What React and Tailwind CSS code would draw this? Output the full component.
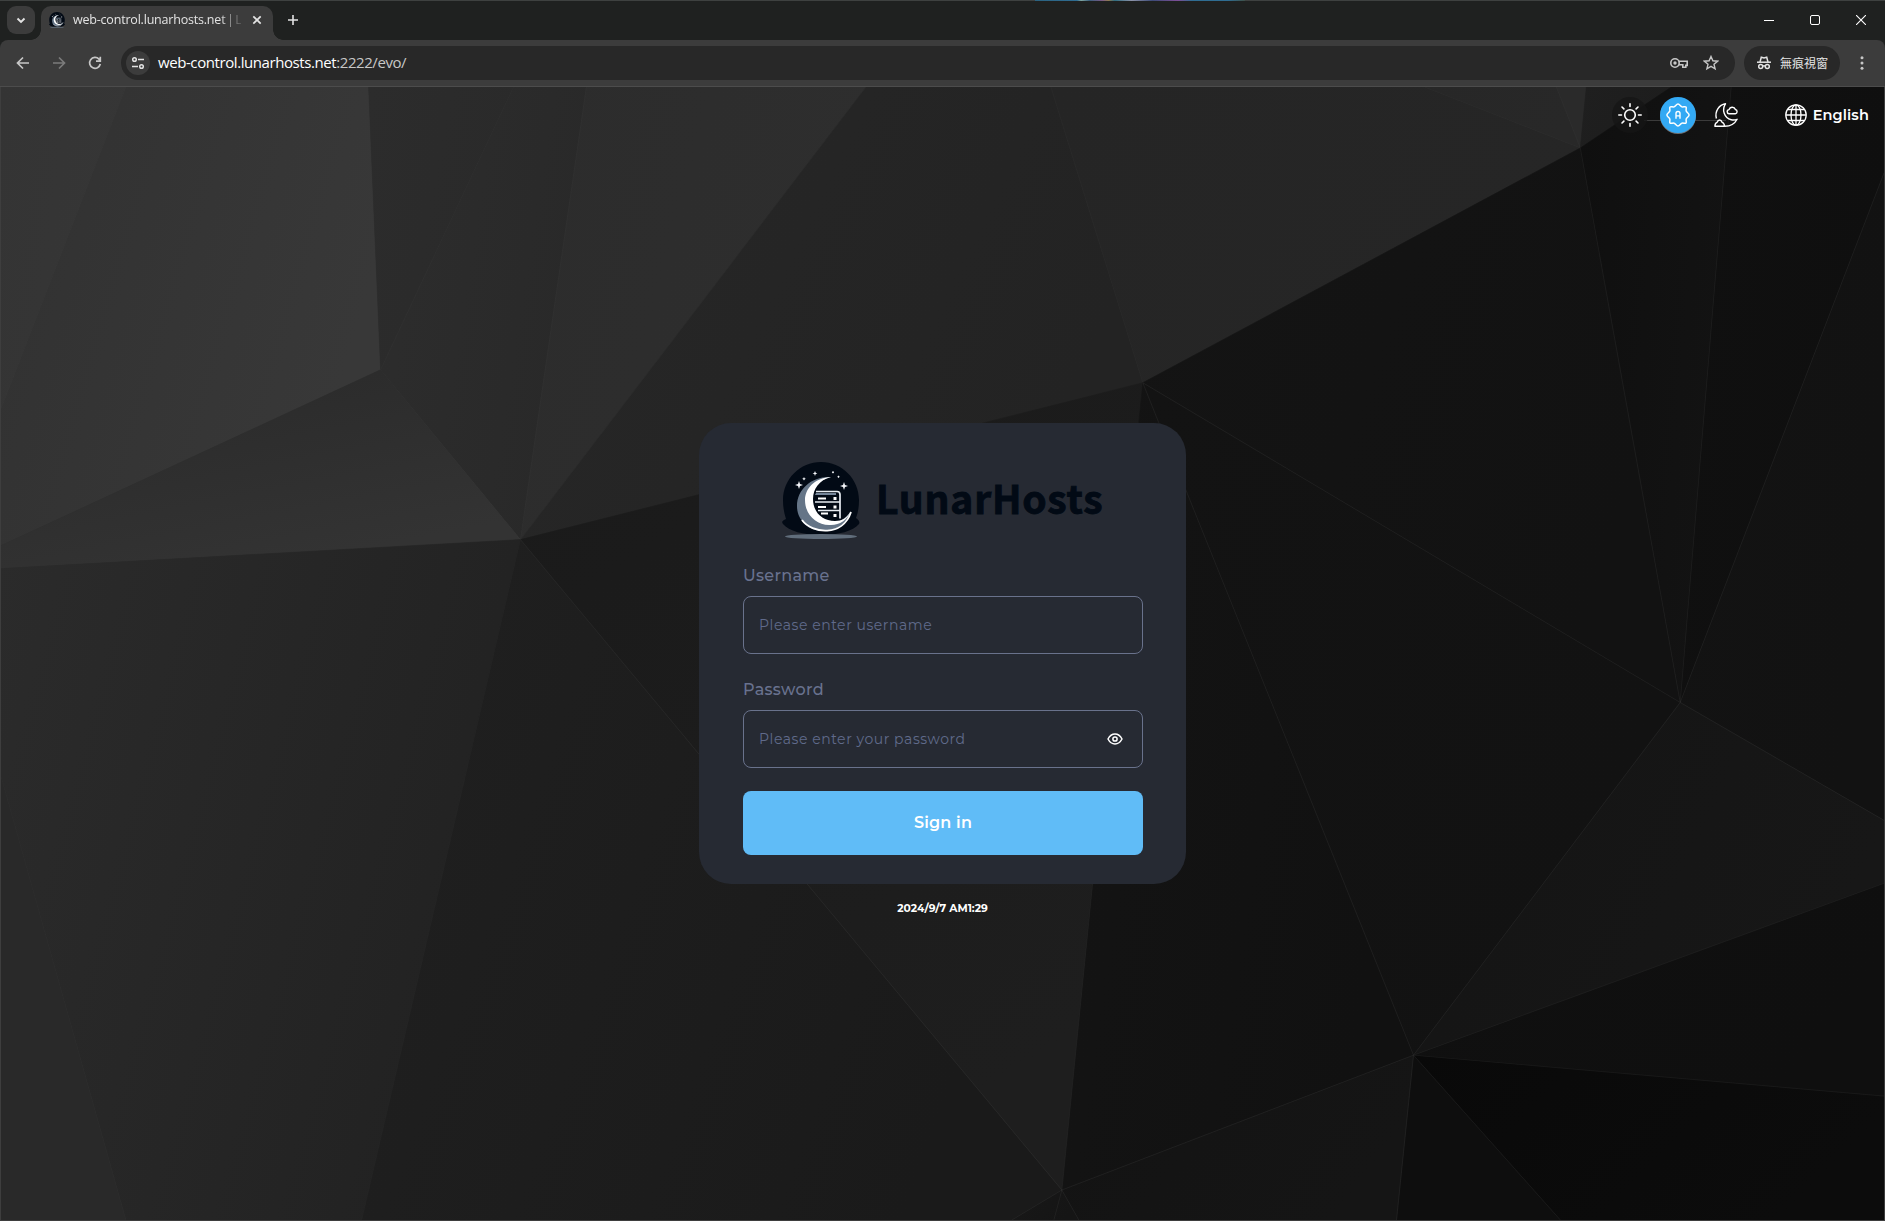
import React from 'react';

const FACETS = [
  { p: '0,87 125,87 0,409', a: '#343434', b: '#363636' },
  { p: '125,87 368,87 380,370 0,546 0,409', a: '#313131', b: '#383838' },
  { p: '368,87 513,87 380,370', a: '#2c2c2c', b: '#2a2a2a' },
  { p: '513,87 586,87 520,540 380,370', a: '#2d2d2d', b: '#292929' },
  { p: '586,87 866,87 520,540', a: '#2c2c2c', b: '#2e2e2e' },
  { p: '866,87 1051,87 1143,383 520,540', a: '#272727', b: '#232323' },
  { p: '1051,87 1425,87 1581,148 1143,383', a: '#252525', b: '#262626' },
  { p: '1425,87 1557,87 1581,148', a: '#272727', b: '#282828' },
  { p: '1557,87 1587,87 1581,148', a: '#2a2a2a', b: '#2a2a2a' },
  { p: '1587,87 1672,87 1581,148', a: '#1f1f1f', b: '#1d1d1d' },
  { p: '380,370 520,540 0,569 0,546', a: '#292929', b: '#333333', v: true },
  { p: '0,569 520,540 361,1221 125,1221 0,777', a: '#2b2b2b', b: '#222222' },
  { p: '0,777 125,1221 0,1221', a: '#292929', b: '#292929' },
  { p: '520,540 1062,1191 1012,1221 361,1221', a: '#202020', b: '#1a1a1a' },
  { p: '520,540 1143,383 1139,423 1062,1191', a: '#1a1a1a', b: '#1e1e1e', v: true },
  { p: '1143,383 1414,1056 1062,1191', a: '#141414', b: '#111111' },
  { p: '1143,383 1681,703 1414,1056', a: '#131313', b: '#121212' },
  { p: '1143,383 1581,148 1681,703', a: '#141414', b: '#121212' },
  { p: '1581,148 1672,87 1732,87 1681,703', a: '#0f0f0f', b: '#131313' },
  { p: '1732,87 1885,87 1885,173 1681,703', a: '#101010', b: '#0f0f0f' },
  { p: '1885,173 1885,821 1681,703', a: '#131313', b: '#121212' },
  { p: '1681,703 1885,821 1885,884 1414,1056', a: '#141414', b: '#171717' },
  { p: '1414,1056 1885,884 1885,1097', a: '#101010', b: '#0f0f0f' },
  { p: '1414,1056 1885,1097 1885,1221 1561,1221', a: '#090909', b: '#0c0c0c' },
  { p: '1414,1056 1561,1221 1397,1221', a: '#0e0e0e', b: '#0e0e0e' },
  { p: '1414,1056 1397,1221 1079,1221 1062,1191', a: '#131313', b: '#151515' },
  { p: '1062,1191 1079,1221 1012,1221', a: '#181818', b: '#151515' },
];

const EDGES =
  'M1143 383 1159 423 1414 1056 1062 1191M1143 383 1681 703 1885 821M1581 148 1681 703 1732 87M1681 703 1885 173M1681 703 1414 1056 1885 884M1414 1056 1885 1097M1414 1056 1561 1221M1414 1056 1397 1221M520 540 1062 1191 1139 423M1062 1191 1012 1221M1062 1191 1054 1221M1062 1191 1079 1221';

const SOFT_EDGES =
  'M125 87 0 409M380 370 513 87M380 370 520 540 586 87M520 540 866 87M520 540 361 1221M0 777 125 1221M1143 383 1051 87M1581 148 1425 87M1581 148 1557 87';

function Backdrop() {
  return (
    <svg className="absolute inset-0 h-full w-full" viewBox="0 87 1885 1134" preserveAspectRatio="none" aria-hidden="true">
      <defs>
        {FACETS.map((f, i) => (
          <linearGradient key={i} id={`facet${i}`} x1="0" y1="0" x2={f.v ? '0.5' : '1'} y2={f.v ? '1' : '0.35'}>
            <stop offset="0" stopColor={f.a} />
            <stop offset="1" stopColor={f.b} />
          </linearGradient>
        ))}
      </defs>
      {FACETS.map((f, i) => (
        <polygon key={i} points={f.p} fill={`url(#facet${i})`} stroke={`url(#facet${i})`} strokeWidth="0.6" />
      ))}
      <path d={EDGES} fill="none" stroke="#fff" strokeOpacity="0.05" />
      <path d={SOFT_EDGES} fill="none" stroke="#fff" strokeOpacity="0.025" />
    </svg>
  );
}

function MoonMark({ className }) {
  return (
    <svg className={className} viewBox="0 0 78 78" aria-hidden="true">
      <path d="M39 0C60 0 77 17 77 38c0 7-1 13-3 18 3 2 4 4 3 6-6 7-20 11-38 11S7 69 1 62c-2-2 0-4 3-5C2 51 1 45 1 38 1 17 18 0 39 0z" fill="#020a15" />
      <ellipse cx="39" cy="74.5" rx="36" ry="2.4" fill="#606d7b" />
      <path d="M34 29.500h21q3 0 3 3v24M33 40h25M36 48.500h22" fill="none" stroke="#e8edf2" strokeWidth="1.700" />
      <path d="M34 31h20v2H33z" fill="#75869a" />
      <path d="M36 36.500h8M36 45h8M39 51.500h7" stroke="#fff" strokeWidth="2" />
      <path d="M51.500 36.500h3M51.500 45h3M51.500 53.500h3" stroke="#fff" strokeWidth="2.800" />
      <path d="M49 15C30 14 15 27 15 44c0 14 11 25 26 25 14 0 24-7 28-20-6 9-14 12-22 12C34 60 28 50 28 38c0-10 8-20 21-23z" fill="#657587" />
      <path d="M49 15C32 16 23 27 23 38c0 15 12 26 26 25 9 0 16-5 20-14-4 7-9 10-16 10C40 59 31 50 31 37c0-10 6-19 18-22z" fill="#fff" />
      <path d="M20 58C30 72 61 75 69 50" fill="none" stroke="#fff" strokeWidth="1.800" />
      <path d="M17 19l1 3 3 1-3 1-1 3-1-3-3-1 3-1zM62 20l1 3 3 1-3 1-1 3-1-3-3-1 3-1zM33 9l.7 1.700 1.700.7-1.700.7L33 14l-.7-1.900-1.700-.7 1.700-.7zM22 15l.6 1.200 1.200.6-1.200.6L22 18.500l-.6-1.100-1.200-.6 1.200-.6zM51 9l1.200 1.200L51 11.500l-1.200-1.300zM56.500 13.500l1.200 1.300-1.200 1.200-1.200-1.200z" fill="#f4f6fa" />
    </svg>
  );
}

const stroke = { fill: 'none', stroke: 'currentColor' };

function TabStrip() {
  return (
    <div className="relative flex h-10 shrink-0 items-start border-t border-[#3e4140] bg-[#1f2120] pl-[7px] pt-[5px] text-[#e3e3e3]">
      <span className="absolute -top-px left-[1035px] h-px w-[210px] bg-[linear-gradient(90deg,#2b6280,#2f6d92_20%,#7fa5a0_22%,#3b5f7d_26%,#7a5a86_32%,#8f7a52_35%,#2f6d80_38%,#8c93a8_46%,#3d4b78_56%,#7d4f96_68%,#2f6d92_75%,#2f6d92_92%,#3e5149)]" />
      <button className="grid h-7 w-7 place-items-center rounded-[9px] bg-[#3c3c3c]">
        <svg className="h-4 w-4" viewBox="0 0 16 16" {...stroke} strokeWidth="1.900"><path d="m4.500 6.500 3.500 3.500 3.500-3.500" /></svg>
      </button>
      <div className="relative ml-1.5 flex h-[34px] w-[232px] items-center rounded-t-[10px] bg-[#3c3c3c] pb-[6px] pl-2">
        <span className="absolute -left-2.5 bottom-0 h-2.5 w-2.5 bg-[radial-gradient(circle_at_0_0,transparent_9.500px,#3c3c3c_10px)]" />
        <span className="absolute -right-2.5 bottom-0 h-2.5 w-2.5 bg-[radial-gradient(circle_at_100%_0,transparent_9.500px,#3c3c3c_10px)]" />
        <MoonMark className="h-4 w-4 shrink-0" />
        <span className="ml-2 w-[168px] whitespace-nowrap font-['Open_Sans',sans-serif] text-[12.500px] leading-4 tracking-[-0.200px] [word-spacing:-1.500px] [mask-image:linear-gradient(to_right,#000_146px,transparent_172px)]">
          web-control.lunarhosts.net | L
        </span>
        <svg className="ml-2 h-4 w-4" viewBox="0 0 16 16" {...stroke} strokeWidth="1.700"><path d="m4.300 4.300 7.400 7.400M11.700 4.300l-7.400 7.400" /></svg>
      </div>
      <svg className="ml-3 mt-1.5 h-4 w-4" viewBox="0 0 16 16" {...stroke} strokeWidth="1.600"><path d="M8 3v10M3 8h10" /></svg>
      <div className="ml-auto flex items-center gap-[36px] pr-[19px] pt-[9px] text-white">
        <svg className="h-2.5 w-2.5" viewBox="0 0 10 10" {...stroke}><path d="M0 5.500h10" /></svg>
        <svg className="h-2.5 w-2.5" viewBox="0 0 10 10" {...stroke}><rect x=".5" y=".5" width="9" height="9" rx="1.500" /></svg>
        <svg className="h-2.5 w-2.5" viewBox="0 0 10 10" {...stroke} strokeWidth="1.100"><path d="m0 0 10 10M10 0 0 10" /></svg>
      </div>
    </div>
  );
}

function Toolbar() {
  return (
    <div className="flex h-[47px] shrink-0 items-center rounded-t-lg border-b border-[#4c4c4c] bg-[#3c3c3c] pl-[15px] text-[#c7c7c7]">
      <svg className="h-4 w-4" viewBox="0 0 16 16" {...stroke} strokeWidth="1.700"><path d="M14 8H3M8 2.500 2.500 8 8 13.500" /></svg>
      <svg className="ml-5 h-4 w-4 text-[#7b7b7b]" viewBox="0 0 16 16" {...stroke} strokeWidth="1.700"><path d="M2 8h11M8 2.500 13.500 8 8 13.500" /></svg>
      <svg className="ml-5 h-4 w-4" viewBox="0 0 16 16" {...stroke} strokeWidth="1.700"><path d="M13.300 9A5.400 5.400 0 1 1 12 4.200l1 1M13.300 1.800v4.400H9" /></svg>
      <div className="ml-[18px] flex h-[34px] flex-1 items-center rounded-full bg-[#282828] pl-[5px] pr-4">
        <span className="grid h-6 w-6 place-items-center rounded-full bg-[#3c3c3c] text-[#e3e3e3]">
          <svg className="h-4 w-4" viewBox="0 0 16 16" {...stroke} strokeWidth="1.500"><circle cx="4.500" cy="4.500" r="1.800" /><path d="M8 4.500h6M2 11.500h6" /><circle cx="11.500" cy="11.500" r="1.800" /></svg>
        </span>
        <span className="mb-0.5 ml-2 font-['Open_Sans',sans-serif] text-[15px] leading-5 tracking-[-0.420px] text-white">
          web-control.lunarhosts.net<span className="text-[#c7c7c7]">:2222/evo/</span>
        </span>
        <svg className="ml-auto h-[18px] w-[18px]" viewBox="0 0 18 18" {...stroke} strokeWidth="1.600"><circle cx="5" cy="9" r="4.200" /><circle cx="5" cy="9" r="1.700" fill="currentColor" stroke="none" /><path d="M9 7.200h8.200v4.200h-1.400v1.800h-3v-2.400H9" /></svg>
        <svg className="ml-[15px] h-4 w-4" viewBox="0 0 16 16" {...stroke} strokeWidth="1.400"><path d="m8 1.500 1.900 4.300 4.700.4-3.600 3.100 1.100 4.600L8 11.400l-4.100 2.500L5 9.300 1.400 6.200l4.700-.4z" /></svg>
      </div>
      <div className="ml-[9px] flex h-[34px] w-24 items-center rounded-full bg-[#282828] pl-3 text-[#e3e3e3]">
        <svg className="h-4 w-4" viewBox="0 0 16 16" {...stroke} strokeWidth="1.500"><path d="M1 7.200h14" /><path d="M4 7 5.300 2.200l2.700.7 2.700-.7L12 7" /><circle cx="4.700" cy="11.500" r="2" /><circle cx="11.300" cy="11.500" r="2" /><path d="M6.700 11.200q1.300-.8 2.600 0" /></svg>
        <span className="ml-2 whitespace-nowrap font-['Noto_Sans_CJK_TC',sans-serif] text-xs leading-4">無痕視窗</span>
      </div>
      <svg className="ml-3.5 mr-[15px] h-4 w-4" viewBox="0 0 16 16" fill="currentColor"><circle cx="8" cy="2.800" r="1.500" /><circle cx="8" cy="8" r="1.500" /><circle cx="8" cy="13.200" r="1.500" /></svg>
    </div>
  );
}

function ThemeBar() {
  return (
    <div className="relative flex h-[56px] items-center justify-end pr-[15px] text-white">
      <span className="absolute right-[158px] top-[33px] h-px w-[82px] bg-[#3b3b3b]" />
      <span className="relative grid h-9 w-9 place-items-center rounded-full bg-[#151515]/80">
        <svg className="h-6 w-6" viewBox="0 0 24 24" {...stroke} strokeWidth="1.600" strokeLinecap="round"><circle cx="12" cy="12" r="5.300" /><path d="M12 .8v2.700M12 20.500v2.700M.8 12h2.700M20.500 12h2.700M4 4l1.900 1.900M18.100 18.100 20 20M4 20l1.900-1.900M18.100 5.900 20 4" /></svg>
      </span>
      <span className="relative ml-3 grid h-9 w-9 place-items-center rounded-full bg-[#33a9f4] shadow-[0_1px_0_#6d6f72]">
        <svg className="h-6 w-6" viewBox="0 0 24 24" {...stroke} strokeWidth="1.500" strokeLinejoin="round"><path d="M12 .9c1.700 0 2.400 2.400 3.900 2.900 1.500.4 3.300-.7 4.100.2s-.3 2.600.2 4.100c.5 1.500 2.900 2.200 2.900 3.900s-2.400 2.400-2.900 3.900c-.5 1.500.6 3.300-.2 4.100-.8.900-2.600-.2-4.100.2-1.500.5-2.200 2.900-3.900 2.900s-2.400-2.400-3.900-2.900c-1.500-.4-3.300.7-4.100-.2s.3-2.600-.2-4.100C3.300 14.400.9 13.700.9 12s2.400-2.400 2.900-3.900c.5-1.500-.6-3.300.2-4.100.8-.9 2.600.2 4.100-.2C9.600 3.300 10.300.9 12 .9z" /><path d="M10 15.800v-5.300A2 2 0 0 1 14 10.500v5.300M10 12.900h4" strokeWidth="1.400" /></svg>
      </span>
      <span className="relative ml-3 grid h-9 w-9 place-items-center">
        <svg className="h-6 w-6" viewBox="0 0 24 24" {...stroke} strokeWidth="1.400" strokeLinejoin="round"><path d="M2.400 15.500C.5 8.500 5 1.800 11.500.8c-4 5.700-1.300 14.300 5.700 15.900 2 .5 4 .3 5.900-.4-2.200 4.200-6.500 7-12.300 7" /><path d="M15.500 10.800a2.100 2.100 0 0 1-.4-4.200 3.300 3.300 0 0 1 6.300-.1 2.200 2.200 0 0 1-.1 4.300z" /><path d="M.9 23.300C.9 21 2 19.800 3.300 19.200 3.600 17.700 4.600 17 5.600 17s2 .7 2.300 2.200c1.300.6 2.600 1.800 2.600 4.100z" /></svg>
      </span>
      <button className="ml-[41px] flex items-center gap-1.5">
        <svg className="h-[22px] w-[22px]" viewBox="0 0 22 22" {...stroke} strokeWidth="1.300"><circle cx="11" cy="11" r="10.200" /><ellipse cx="11" cy="11" rx="5" ry="10.200" /><path d="M11 1v20M.8 11h20.400M2.800 5.500h16.400M2.800 16.500h16.400" /></svg>
        <span className="font-['Montserrat',sans-serif] text-[14.500px] font-semibold leading-5 tracking-[0.120px]">English</span>
      </button>
    </div>
  );
}

function Field({ label, placeholder, eye, className }) {
  return (
    <div className={className}>
      <div className="text-base font-medium leading-5 tracking-[0.320px] text-[#69728f]">{label}</div>
      <div className="mt-2.5 flex h-[58px] items-center justify-between rounded-lg border border-[#69728c] pl-[15px] pr-[19px]">
        <span className="text-[14px] leading-5 tracking-[0.550px] text-[#606a8b]">{placeholder}</span>
        {eye && (
          <svg className="h-4 w-4 text-white" viewBox="0 0 16 16" {...stroke} strokeWidth="1.500"><path d="M1 8q2.600-5 7-5t7 5q-2.600 5-7 5T1 8z" /><circle cx="8" cy="8" r="2.100" /></svg>
        )}
      </div>
    </div>
  );
}

export default function App() {
  return (
    <div className="flex h-[1221px] w-[1885px] flex-col overflow-hidden bg-[#1f2120]">
      <TabStrip />
      <Toolbar />
      <main className="relative flex-1 overflow-hidden border-x border-b border-[#3e3e3e]">
        <Backdrop />
        <ThemeBar />
        <div className="relative mt-[280px] flex flex-col items-center font-['Montserrat',sans-serif]">
          <section className="h-[461px] w-[487px] rounded-[32px] bg-[#262a33] pl-11 pr-[43px] pt-[38px]">
            <div className="flex h-[78px] items-center pl-[39px]">
              <MoonMark className="mt-0.5 h-[78px] w-[78px] shrink-0" />
              <span className="mb-1.5 ml-4 whitespace-nowrap font-['Noto_Sans_CJK_TC',sans-serif] text-[39px] font-bold leading-[72px] tracking-[0.800px] text-[#020a15] [-webkit-text-stroke:0.900px_#020a15]">LunarHosts</span>
            </div>
            <Field className="mt-[27px]" label="Username" placeholder="Please enter username" />
            <Field className="mt-[26px]" label="Password" placeholder="Please enter your password" eye />
            <button className="mt-[23px] h-16 w-full rounded-lg bg-[#60bcf7] text-base font-semibold tracking-[0.200px] text-white">Sign in</button>
          </section>
          <div className="mt-[17px] text-[10.700px] font-bold leading-4 text-white">2024/9/7 AM1:29</div>
        </div>
      </main>
    </div>
  );
}
